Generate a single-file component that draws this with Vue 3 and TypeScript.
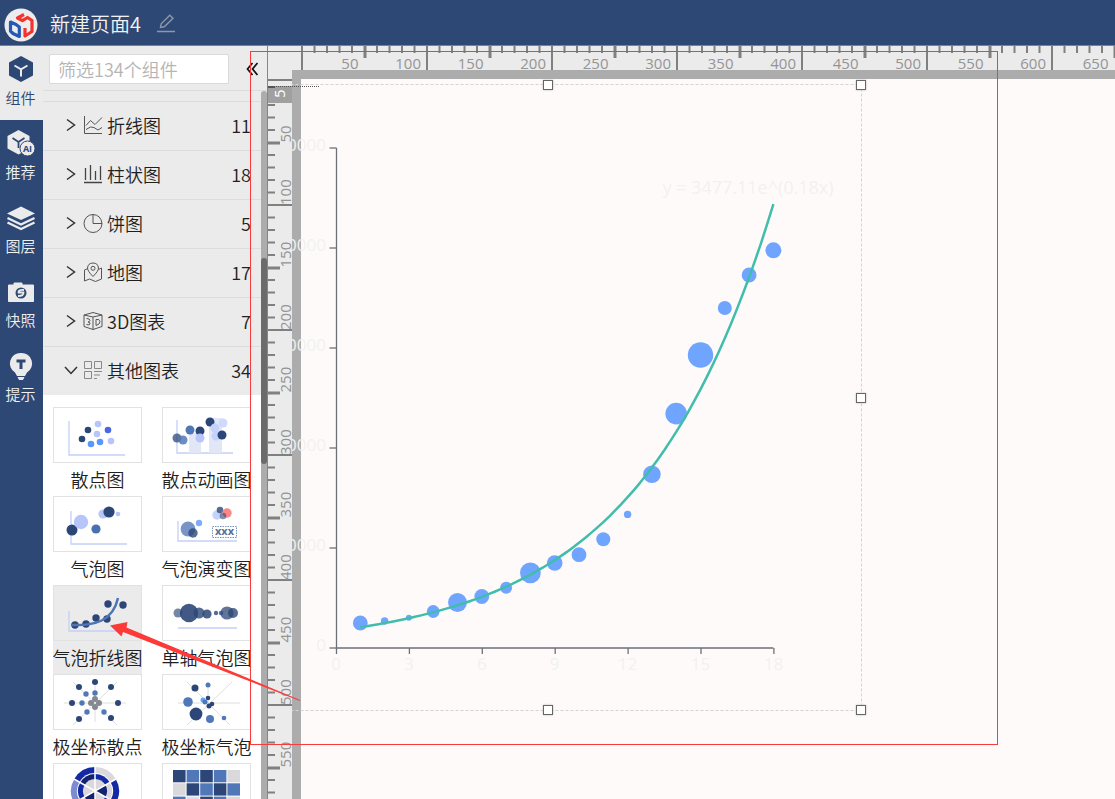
<script setup lang="ts">
import { computed, onBeforeUnmount, onMounted, ref } from 'vue'

interface NavItem { id: string; label: string }
interface Category { id: string; label: string; count: number; open: boolean }
interface Dot { x: number; y: number; r: number; c: string; o?: number }
interface Thumb { id: string; label?: string; axis?: string; bars?: number[][]; spokes?: string; dots: Dot[] }

const keyword = ref('')
const activeNav = ref('component')

const navItems: NavItem[] = [
  { id: 'component', label: '组件' },
  { id: 'recommend', label: '推荐' },
  { id: 'layers', label: '图层' },
  { id: 'snapshot', label: '快照' },
  { id: 'tips', label: '提示' },
]

const categories: Category[] = [
  { id: 'line', label: '折线图', count: 11, open: false },
  { id: 'bar', label: '柱状图', count: 18, open: false },
  { id: 'pie', label: '饼图', count: 5, open: false },
  { id: 'map', label: '地图', count: 17, open: false },
  { id: 'three', label: '3D图表', count: 7, open: false },
  { id: 'other', label: '其他图表', count: 34, open: true },
]

const NAVY = '#2c4777'
const MID = '#5078b8'
const PALE = '#b7c5fa'
const BRIGHT = '#5a96ff'
const GREY = '#85888f'

const d = (x: number, y: number, r: number, c: string, o = 1): Dot => ({ x, y, r, c, o })

const thumbs: Thumb[] = [
  {
    id: 'scatter', label: '散点图', axis: 'M16 14V48H72',
    dots: [d(35, 23, 3.3, NAVY), d(29, 32, 3.3, NAVY), d(45, 17, 3.3, PALE), d(44, 27, 3.3, PALE), d(58, 34, 3.3, PALE), d(55, 23, 3.3, '#4a69e0'), d(38, 37, 3.3, BRIGHT), d(47, 35, 3.3, BRIGHT)],
  },
  {
    id: 'scatter-anim', label: '散点动画图', axis: 'M15 13V46H71', bars: [[27, 26, 12, 20], [47, 11, 13, 35]],
    dots: [d(15, 31, 4.5, NAVY, 0.75), d(21, 33, 4.5, MID, 0.85), d(28, 23, 4.5, MID), d(38, 24, 4.5, NAVY), d(38, 31, 4.5, PALE), d(48, 15, 4.5, NAVY), d(53, 21, 4.5, '#c5d2fb'), d(61, 16, 4.5, '#ced9fc'), d(54, 29, 4.5, '#c5d2fb'), d(60, 28, 4.5, NAVY)],
  },
  {
    id: 'bubble', label: '气泡图', axis: 'M18 15V48H74',
    dots: [d(19, 34, 5.5, NAVY), d(28, 26, 7.2, PALE), d(43, 33, 4.6, '#4a70b0'), d(50, 18, 4.6, PALE), d(56, 16, 5.6, NAVY), d(65, 18, 2.3, PALE)],
  },
  {
    id: 'evolve', label: '气泡演变图', axis: 'M16 25V45H75',
    dots: [d(26, 33, 7.4, '#7795c6'), d(31, 37, 4.7, NAVY, 0.8), d(37, 27, 3.2, '#80adff'), d(55, 19, 4.7, '#c5d2fb'), d(58, 14, 3.3, NAVY, 0.8), d(65, 17, 4.7, '#fb8686'), d(61, 20, 3.3, NAVY, 0.6)],
  },
  {
    id: 'curve', label: '气泡折线图', axis: 'M16 26V46H70',
    dots: [d(22, 40, 3.7, NAVY), d(33, 39, 3.7, NAVY), d(43, 33, 3.7, NAVY), d(54, 34, 3.7, NAVY), d(55, 19, 3.7, NAVY), d(70, 20, 3.7, NAVY)],
  },
  {
    id: 'single', label: '单轴气泡图', axis: 'M16 43H75',
    dots: [d(16, 28, 4.5, NAVY, 0.65), d(37, 28, 5.6, NAVY, 0.8), d(27, 28, 9.2, NAVY, 0.9), d(45, 29, 4.6, NAVY, 0.85), d(54, 28, 2.2, NAVY, 0.8), d(59, 28, 2.2, MID), d(65, 28, 6.6, NAVY, 0.75), d(71, 28, 5, NAVY, 0.8)],
  },
  {
    id: 'polar', label: '极坐标散点', spokes: 'M11 29H73M42 8V48M20 8L64 51M64 8L20 51',
    dots: [d(42, 8, 3, NAVY), d(26, 13, 3, NAVY), d(58, 13, 3, NAVY), d(19, 29, 3, NAVY), d(65, 29, 3, NAVY), d(26, 45, 3, NAVY), d(58, 44, 3, NAVY), d(42, 19, 2.7, MID), d(33, 20, 2.7, MID), d(29, 29, 2.7, MID), d(34, 38, 2.7, MID), d(51, 38, 2.7, MID), d(42, 25, 3, GREY), d(38, 29, 3, GREY), d(46, 29, 3, GREY), d(42, 33, 3, GREY)],
  },
  {
    id: 'polar-bubble', label: '极坐标气泡', spokes: 'M16 29H78M46 8V29M25 8L68 51M70 8L25 51',
    dots: [d(33, 14, 3.5, NAVY), d(46, 11, 2.5, MID), d(26, 28, 4.8, MID), d(34, 40, 6.4, NAVY), d(48, 45, 4, MID), d(62, 44, 2.3, MID), d(41, 26, 2.5, '#5aa5f5'), d(43, 28, 2.5, MID), d(46, 24, 2.3, NAVY), d(50, 30, 2.3, NAVY), d(47, 32, 2.5, NAVY)],
  },
  { id: 'sunburst', dots: [] },
  { id: 'heat', dots: [] },
]

const heatRows: string[][] = [
  [NAVY, MID, NAVY, MID, '#d9d8da'],
  ['#d9d8da', NAVY, MID, NAVY, MID],
  [MID, '#dcdff2', NAVY, MID, '#d9d8da'],
  [NAVY, MID, '#d9d8da', NAVY, MID],
]

const wedge = (cx: number, cy: number, r: number, from: number, to: number): string => {
  const p = (a: number) => {
    const t = ((a - 90) * Math.PI) / 180
    return `${(cx + r * Math.cos(t)).toFixed(2)} ${(cy + r * Math.sin(t)).toFixed(2)}`
  }
  return `M${cx} ${cy}L${p(from)}A${r} ${r} 0 0 1 ${p(to)}Z`
}
const rings = [
  { r: 24, colors: ['#dad8dc', '#142aa5', '#dad8dc', '#142aa5', '#7d8bd0', '#142aa5'] },
  { r: 18, colors: ['#ffffff', '#ffffff', '#ffffff', '#ffffff', '#ffffff', '#ffffff'] },
  { r: 17, colors: ['#142aa5', '#dad8dc', '#142aa5', '#dad8dc', '#142aa5', '#12236f'] },
  { r: 12, colors: ['#dad8dc', '#12236f', '#dad8dc', '#12236f', '#dad8dc', '#dad8dc'] },
]

// Rulers: one tick per 10 units at a zoom of 1.25
const STEP = 12.5
const viewW = ref(window.innerWidth)
const viewH = ref(window.innerHeight)
const onResize = () => {
  viewW.value = window.innerWidth
  viewH.value = window.innerHeight
}
onMounted(() => window.addEventListener('resize', onResize))
onBeforeUnmount(() => window.removeEventListener('resize', onResize))

const makeTicks = (length: number) =>
  Array.from({ length: Math.floor(length / STEP) + 1 }, (_, i) => ({
    pos: i * STEP,
    value: i * 10,
    len: i % 10 === 0 ? 24 : i % 5 === 0 ? 12 : 7,
    w: i % 5 === 0 && i % 10 !== 0 ? 3 : 2,
  }))
const makeMarks = (length: number) =>
  Array.from({ length: Math.floor(length / (STEP * 5)) }, (_, i) => ({ pos: (i + 1) * STEP * 5, value: (i + 1) * 50 }))

const topTicks = computed(() => makeTicks(viewW.value - 302))
const topMarks = computed(() => makeMarks(viewW.value - 302))
const leftTicks = computed(() => makeTicks(viewH.value - 80).filter((t) => t.value !== 10))
const leftMarks = computed(() => makeMarks(viewH.value - 80))

// Chart plot area
const X0 = 101
const AXIS_X = 101.5
const Y0 = 563
const px = (x: number) => X0 + x * 24.3
const py = (y: number) => Y0 - y / 200

const samples: [number, number][] = [
  [5000, 7.4], [5400, 3.7], [6060, 3], [7300, 6.4], [9100, 9.4], [10300, 7.4],
  [12060, 6], [15040, 10.4], [17000, 7.8], [18660, 7.4], [21740, 7], [26720, 3.7],
  [34740, 8.8], [46880, 10.8], [58600, 12.7], [68000, 7], [74600, 7.4], [79540, 8],
]
const bubbles = samples.map(([v, r], i) => ({ x: px(i + 1), y: py(v), r }))
const curve = Array.from({ length: 69 }, (_, i) => 1 + i / 4)
  .map((x, i) => `${i ? 'L' : 'M'}${px(x).toFixed(1)} ${py(3477.11 * Math.exp(0.18 * x)).toFixed(1)}`)
  .join('')
const yTicks = [0, 20000, 40000, 60000, 80000, 100000]
const xTicks = [0, 3, 6, 9, 12, 15, 18]
const handles = ['n', 'ne', 'e', 'se', 's']
</script>

<template>
  <div class="app">
    <header class="header">
      <svg class="logo" viewBox="0 0 34 34" aria-hidden="true">
        <circle cx="17" cy="17" r="16.5" fill="#ececec" />
        <g fill="none" stroke-width="3.200" stroke-linejoin="round">
          <path d="M6.500 14L12 16.500L15.300 19V28.500L9 25.500L6.500 23Z" stroke="#2557b5" />
          <path d="M20 6.500L13.500 10L18.500 12.700L23.500 9.500L28 12.500V23.500L21 28V20" stroke="#f5322d" />
        </g>
      </svg>
      <h1 class="title">新建页面4</h1>
      <button class="edit" type="button" aria-label="重命名">
        <svg viewBox="0 0 18 19"><path d="M0 17.500H18M3.500 13.500L4.200 9.800L12.800 1.200L16 4.200L7.300 12.800Z" fill="none" stroke="#8c98aa" stroke-width="1.400" /></svg>
      </button>
    </header>

    <div class="body">
      <nav class="nav">
        <button v-for="n in navItems" :key="n.id" type="button" class="nav-item" :class="{ active: n.id === activeNav }" @click="activeNav = n.id">
          <svg class="nav-icon" viewBox="0 0 30 30" aria-hidden="true">
            <g v-if="n.id === 'component'">
              <path d="M15 1L27 7.500V20.500L15 27L3 20.500V7.500Z" fill="#2d4875" />
              <path d="M8.500 10.500L15 14.300L21.500 10.500M15 14.300V21.500" fill="none" stroke="#ebebeb" stroke-width="2" />
            </g>
            <g v-else-if="n.id === 'recommend'">
              <path d="M12.500 1L23.500 7V19.500L12.500 25.500L1.500 19.500V7Z" fill="#ebebeb" />
              <path d="M6.500 9L12.500 13L18.500 9M12.500 13V19" fill="none" stroke="#2d4875" stroke-width="1.800" />
              <circle cx="21.500" cy="19.500" r="7.500" fill="#ebebeb" stroke="#2d4875" />
              <text x="21.500" y="23" class="ai">AI</text>
            </g>
            <g v-else-if="n.id === 'layers'">
              <path d="M15 3.500L29 10.500L15 17L1 10.500Z" fill="#ebebeb" />
              <path d="M1.500 15L15 21.500L28.500 15M1.500 19.500L15 26L28.500 19.500" fill="none" stroke="#ebebeb" stroke-width="2.400" />
            </g>
            <g v-else-if="n.id === 'snapshot'">
              <path d="M2.500 8H8V6H16V8H27.500V24.500H2.500Z" fill="#ebebeb" stroke="#ebebeb" stroke-linejoin="round" />
              <circle cx="15" cy="16" r="5.500" fill="#2d4875" />
              <path d="M18 13Q12 12.500 12.500 15.500H17.500Q18 19 12 19" fill="none" stroke="#ebebeb" stroke-width="1.800" />
            </g>
            <g v-else>
              <path d="M15 2A10.500 10.500 0 0 0 9 21.500L11 25H19L21 21.500A10.500 10.500 0 0 0 15 2ZM11.500 26H18.500L17 29H13Z" fill="#ebebeb" />
              <path d="M10.500 10H19.500M15 10V18" stroke="#2d4875" stroke-width="3" />
            </g>
          </svg>
          <span>{{ n.label }}</span>
        </button>
      </nav>

      <aside class="panel">
        <div class="search">
          <input v-model="keyword" class="search-input" type="text" aria-label="筛选组件" placeholder="筛选134个组件" />
          <button class="collapse" type="button" aria-label="收起">
            <svg viewBox="0 0 13 14"><path d="M6.500 1L1.500 7L6.500 13M11.500 1L6.500 7L11.500 13" fill="none" stroke="#111" stroke-width="1.700" /></svg>
          </button>
        </div>
        <div class="scroll">
          <div class="list">
            <div class="stub"></div>
            <button v-for="c in categories" :key="c.id" type="button" class="category" :class="{ open: c.open }" :aria-expanded="c.open">
              <svg class="caret" viewBox="0 0 14 14" aria-hidden="true"><path :d="c.open ? 'M1 4L7 10.500L13 4' : 'M3 1.500L10.500 7L3 12.500'" fill="none" stroke="#333" stroke-width="1.500" /></svg>
              <svg class="cat-icon" viewBox="0 0 20 20" aria-hidden="true">
                <g fill="none" stroke="#555" stroke-width="1">
                  <path v-if="c.id === 'line'" d="M1.500 1V18.500H19M3 10.500L7.500 5.500L12 9.500L19 2.500M3 14.500L7.500 12L11 12.500L15 15L19 12.500" />
                  <path v-else-if="c.id === 'bar'" d="M1 18.500H19M2.500 4V16M7.500 1V16M12.500 7V16M17.500 2V16" stroke="#444" stroke-width="1.300" />
                  <path v-else-if="c.id === 'pie'" d="M10 1.500A9 9 0 1 0 19 10.500H10ZM10 1.500Q18 2 19 10.500" />
                  <path v-else-if="c.id === 'map'" d="M5 6.500L1.500 8V19L6.500 17L12.500 19.500L18.500 17V6L15.500 7.500M10 14.500Q4.500 9 4.500 6Q5 1 10 1Q15 1 15.500 6Q15.500 9 10 14.500ZM10 4.300A2 2 0 1 0 10 8.300A2 2 0 1 0 10 4.300" />
                  <path v-else-if="c.id === 'three'" d="M1 4L10 1.500L19 4V15.500L10 18.500L1 15.500ZM1 4L10 6L19 4M10 6V18.500M3.500 7.500Q7 7.500 7 9.500Q6.500 11 5 11Q7.500 11.500 7 13Q6.500 14.500 3.500 13.500M13 8.500V14.500Q17 13.500 17 10.500Q16.500 7.500 13 8.500" />
                  <path v-else d="M1.500 1.500H8.500V8.500H1.500ZM11.500 1.500H18.500V8.500H11.500ZM1.500 11.500H8.500V18.500H1.500ZM11 11.500H19M11 15H17M11 18.500H14" stroke="#888" />
                </g>
              </svg>
              <span class="cat-label">{{ c.label }}</span>
              <span class="count">{{ c.count }}</span>
            </button>
            <div class="cards">
              <button v-for="t in thumbs" :key="t.id" type="button" class="card" :class="{ hovered: t.id === 'curve' }">
                <svg class="thumb" viewBox="0 0 89 56" aria-hidden="true">
                  <path v-if="t.spokes" :d="t.spokes" stroke="#dedede" fill="none" />
                  <path v-if="t.axis" :d="t.axis" stroke="#c3d0f8" stroke-width="1.300" fill="none" />
                  <rect v-for="(b, i) in t.bars" :key="'b' + i" :x="b[0]" :y="b[1]" :width="b[2]" :height="b[3]" fill="#e1e7f7" />
                  <circle v-for="(p, i) in t.dots" :key="i" :cx="p.x" :cy="p.y" :r="p.r" :fill="p.c" :fill-opacity="p.o" />
                  <path v-if="t.id === 'curve'" d="M18 40C42 41 60 36 65 13" fill="none" stroke="#4f74b5" stroke-width="2.500" />
                  <g v-if="t.id === 'evolve'">
                    <rect x="50.500" y="30.500" width="24" height="11" fill="#fff" stroke="#7d93bb" stroke-dasharray="1.500 1" />
                    <text x="62.500" y="39" class="xxx">xxx</text>
                  </g>
                  <g v-if="t.id === 'sunburst'">
                    <template v-for="(ring, k) in rings" :key="k">
                      <path v-for="(c, i) in ring.colors" :key="i" :d="wedge(42, 28, ring.r, i * 60, i * 60 + 60)" :fill="c" />
                    </template>
                    <path d="M42 4V52M21 16L63 40M63 16L21 40" stroke="#fff" stroke-width="1.500" />
                  </g>
                  <g v-if="t.id === 'heat'">
                    <template v-for="(row, y) in heatRows" :key="y">
                      <rect v-for="(c, x) in row" :key="x" :x="11 + x * 13.6" :y="7 + y * 13.3" width="12.600" height="12.300" :fill="c" />
                    </template>
                  </g>
                </svg>
                <span v-if="t.label" class="card-label">{{ t.label }}</span>
              </button>
            </div>
          </div>
          <div class="track"><div class="grip"></div></div>
        </div>
      </aside>

      <main class="workspace">
        <svg class="ruler-top" aria-hidden="true">
          <g transform="translate(34 0)">
            <rect v-for="t in topTicks" :key="t.value" :x="t.pos - 1" y="0" :width="t.w" :height="t.len" fill="#808080" />
            <text v-for="m in topMarks" :key="m.value" :x="m.pos - 6" y="23" class="ruler-text end">{{ m.value }}</text>
          </g>
        </svg>
        <svg class="ruler-left" aria-hidden="true">
          <rect x="0" y="16" width="24" height="17" fill="#a0a0a0" />
          <rect x="0" y="16" width="7" height="2" fill="#555" />
          <text transform="translate(17 28) rotate(-90)" class="ruler-text cursor">5</text>
          <g transform="translate(0 10)">
            <rect v-for="t in leftTicks" :key="t.value" x="0" :y="t.pos - 1" :width="t.len" :height="t.w" fill="#808080" />
            <text v-for="m in leftMarks" :key="m.value" :transform="`translate(23 ${m.pos}) rotate(-90)`" class="ruler-text">{{ m.value }}</text>
          </g>
        </svg>
        <section class="stage">
          <div class="paper"></div>
          <div class="selection">
            <svg class="chart" viewBox="0 0 626 625" role="img" aria-label="气泡折线图">
              <rect x="0.500" y="-0.500" width="626" height="626" fill="none" stroke="#d3d3d3" stroke-dasharray="3 2" />
              <g stroke="#6e7079" stroke-width="1.300">
                <path :d="`M${AXIS_X} ${py(100000)}V${Y0}H${px(18)}`" fill="none" />
                <line v-for="y in yTicks" :key="'y' + y" :x1="AXIS_X - 7" :x2="AXIS_X" :y1="py(y)" :y2="py(y)" />
                <line v-for="x in xTicks" :key="'x' + x" :x1="px(x) + 0.5" :x2="px(x) + 0.5" :y1="Y0" :y2="Y0 + 6" />
              </g>
              <text v-for="y in yTicks" :key="'ty' + y" :x="X0 - 10" :y="py(y) + 3" class="axis-text end">{{ y }}</text>
              <text v-for="x in xTicks" :key="'tx' + x" :x="px(x)" :y="Y0 + 22" class="axis-text mid">{{ x }}</text>
              <circle v-for="(b, i) in bubbles" :key="i" :cx="b.x" :cy="b.y" :r="b.r" fill="#6fa5ff" />
              <path :d="curve" fill="none" stroke="#41bdab" stroke-width="2.500" stroke-linejoin="round" />
              <text x="513" y="109" class="axis-text mid formula">y = 3477.11e^(0.18x)</text>
            </svg>
            <i v-for="h in handles" :key="h" class="handle" :class="h"></i>
          </div>
        </section>
        <div class="guide"></div>
      </main>
    </div>

    <div class="frame"></div>
    <svg class="arrow" viewBox="0 0 192 80" aria-hidden="true">
      <path d="M1 5.500L18.500 2L17.500 7.500L191 80V81L14 12L12.500 16.500Z" fill="#fc3a38" />
    </svg>
  </div>
</template>

<style>
body { margin: 0; overflow: hidden; }
</style>

<style scoped>
.app {
  position: relative;
  display: flex;
  flex-direction: column;
  height: 100vh;
  overflow: hidden;
  background: #ebebeb;
  color: #1f1f1f;
  font-family: "Noto Sans CJK SC", "Open Sans", sans-serif;
  font-weight: 350;
}
button { margin: 0; padding: 0; border: 0; background: none; font: inherit; color: inherit; cursor: pointer; }
svg { display: block; }
.header {
  flex: none;
  display: flex;
  align-items: center;
  box-sizing: border-box;
  height: 46px;
  padding: 4px 4px 0;
  background: #2d4875;
  border-bottom: 1px solid #7d8086;
}
.logo { width: 34px; height: 34px; }
.title { margin: 0 0 2px 12px; font-size: 20px; line-height: 30px; font-weight: 350; color: #f2f2f2; }
.edit { margin: 0 0 2px 16px; }
.edit svg { width: 18px; height: 19px; }
.body { flex: 1; display: flex; min-height: 0; }

.nav { flex: none; width: 43px; background: #2d4875; color: #f0f0f0; }
.nav-item {
  display: flex;
  flex-direction: column;
  align-items: center;
  box-sizing: border-box;
  width: 100%;
  height: 74px;
  padding: 9px 2px 0 0;
  font-size: 15px;
  line-height: 26px;
  white-space: nowrap;
}
.nav-item.active { background: #ebebeb; color: #2d4875; }
.nav-icon { flex: none; width: 30px; height: 30px; }
.ai { font: 700 9px "Open Sans", sans-serif; fill: #2d4875; text-anchor: middle; }

.panel { flex: none; display: flex; flex-direction: column; width: 224px; background: #ebebeb; }
.search { flex: none; display: flex; align-items: center; padding: 8px 6px 6px; border-bottom: 1px solid #dcdcdc; }
.search-input {
  box-sizing: border-box;
  width: 180px;
  height: 30px;
  padding: 0 8px;
  border: 1px solid #d9d9d9;
  border-radius: 2px;
  background: #fff;
  font: inherit;
  font-size: 18px;
  outline: none;
}
.search-input::placeholder { color: #b5b5b5; opacity: 1; }
.collapse { margin-left: 17px; }
.collapse svg { width: 13px; height: 14px; }
.scroll { flex: 1; display: flex; min-height: 0; }
.list { flex: 1; min-width: 0; overflow: hidden; }
.stub { height: 10px; border-bottom: 1px solid #dcdcdc; }
.category {
  display: flex;
  align-items: center;
  box-sizing: border-box;
  width: 100%;
  height: 49px;
  padding: 0 10px 2px 21px;
  border-bottom: 1px solid #dcdcdc;
  font-size: 18px;
  line-height: 26px;
}
.category.open { height: 48px; border-bottom: 0; }
.caret { width: 14px; height: 14px; }
.cat-icon { width: 20px; height: 20px; margin: 0 4px 0 5px; }
.count { margin-left: auto; }
.cards {
  display: grid;
  grid-template-columns: 89px 89px;
  align-content: start;
  column-gap: 20px;
  padding: 12px 10px 0;
  min-height: 100vh;
  background: #fff;
}
.card { display: flex; flex-direction: column; align-items: center; height: 89px; }
.card.hovered { background: #ebebeb; }
.thumb { flex: none; width: 89px; height: 56px; outline: 1px solid #e2e2e2; outline-offset: -1px; }
.card-label { font-size: 18px; line-height: 33px; white-space: nowrap; }
.track { flex: none; width: 6px; background: #acacac; border-radius: 3px 3px 0 0; }
.grip { height: 206px; margin-top: 167px; border-radius: 3px; background: #6b6b6b; }

.workspace {
  position: relative;
  flex: 1;
  display: grid;
  grid-template-columns: 24px 1fr;
  grid-template-rows: 24px 1fr;
  min-width: 0;
  border-left: 1px solid #868686;
}
.ruler-top { grid-column: 1 / 3; width: 100%; height: 24px; overflow: visible; }
.ruler-left { width: 24px; height: 100%; min-height: 0; overflow: visible; }
.ruler-text { font: 400 15px "Open Sans", sans-serif; fill: #949494; }
.cursor { fill: #fff; }
.end { text-anchor: end; }
.mid { text-anchor: middle; }
.stage { position: relative; overflow: hidden; background: #acacac; }
.paper { box-sizing: border-box; height: 100%; border: solid #acacac; border-width: 9px 0 0 9px; background: #fffafa; }
.guide { position: absolute; top: 40px; left: 0; width: 51px; border-top: 1px dotted #555; }

.selection { position: absolute; left: -57px; top: 15px; width: 626px; height: 625px; }
.chart { width: 100%; height: 100%; overflow: visible; }
.axis-text { font: 400 17px "Open Sans", sans-serif; fill: #f1f1f1; }
.formula { font-size: 18px; }
.xxx { font: 700 11px "Open Sans", sans-serif; fill: #566f9c; text-anchor: middle; }
.handle {
  position: absolute;
  box-sizing: border-box;
  width: 10px;
  height: 10px;
  margin: -5px;
  border: 1px solid #666;
  background: #fff;
  box-shadow: 0 0 2px #bbb;
}
.n { left: 50%; top: 0; }
.ne { left: 100%; top: 0; }
.e { left: 100%; top: 50%; }
.se { left: 100%; top: 100%; }
.s { left: 50%; top: 100%; }

.frame { position: absolute; left: 250px; top: 51px; box-sizing: border-box; width: 748px; height: 694px; border: 1px solid #f83c3c; pointer-events: none; }
.arrow { position: absolute; left: 109px; top: 620px; width: 192px; height: 80px; overflow: visible; pointer-events: none; }
</style>
